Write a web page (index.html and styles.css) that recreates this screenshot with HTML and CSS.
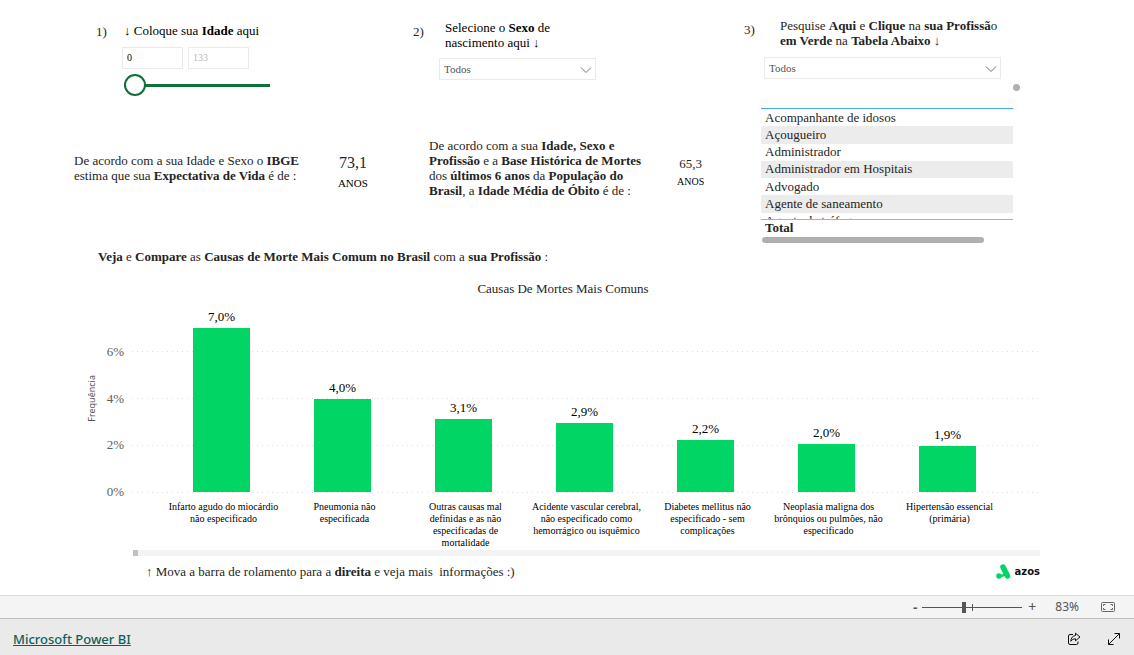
FILE: index.html
```html
<!DOCTYPE html>
<html lang="pt-BR">
<head>
<meta charset="utf-8">
<meta name="viewport" content="width=device-width, initial-scale=1">
<title>Causas De Mortes Mais Comuns</title>
<link rel="stylesheet" href="styles.css">
</head>
<body>
<main class="report">
  <div class="filters">
    <section class="column column-age">
      <div class="step">
        <span class="step-number">1)</span>
        <div class="step-body">
          <label class="prompt" for="age">↓ Coloque sua <b>Idade</b> aqui</label>
          <div class="range-inputs">
            <input type="text" value="0" aria-label="Idade mínima">
            <input type="text" value="133" aria-label="Idade máxima" disabled>
          </div>
          <input class="age-slider" id="age" type="range" min="0" max="133" value="0">
        </div>
      </div>
      <div class="metric metric-life">
        <p>De acordo com a sua Idade e Sexo o <b>IBGE</b><br>estima que sua <b>Expectativa de Vida</b> é de :</p>
        <div class="card card-large"><strong>73,1</strong><span>ANOS</span></div>
      </div>
    </section>

    <section class="column column-sex">
      <div class="step">
        <span class="step-number">2)</span>
        <div class="step-body">
          <label class="prompt" for="sex">Selecione o <b>Sexo</b> de<br>nascimento aqui ↓</label>
          <div class="dropdown">
            <select id="sex"><option>Todos</option></select>
            <svg viewBox="0 0 12 8" width="12" height="8" aria-hidden="true"><path d="M1 1.500 6 6.500 11 1.500"/></svg>
          </div>
        </div>
      </div>
      <div class="metric metric-death">
        <p>De acordo com a sua <b>Idade, Sexo e<br>Profissão</b> e a <b>Base Histórica de Mortes</b><br>dos <b>últimos 6 anos</b> da <b>População do<br>Brasil</b>, a <b>Idade Média de Óbito</b> é de :</p>
        <div class="card"><strong>65,3</strong><span>ANOS</span></div>
      </div>
    </section>

    <section class="column column-job">
      <div class="step">
        <span class="step-number">3)</span>
        <div class="step-body">
          <label class="prompt" for="job">Pesquise <b>Aqui</b> e <b>Clique</b> na <b>sua Profissã</b>o<br><b>em Verde</b> na <b>Tabela Abaixo</b> ↓</label>
          <div class="dropdown">
            <select id="job"><option>Todos</option></select>
            <svg viewBox="0 0 12 8" width="12" height="8" aria-hidden="true"><path d="M1 1.500 6 6.500 11 1.500"/></svg>
          </div>
        </div>
      </div>
      <span class="scroll-dot"></span>
      <div class="jobs">
        <div class="jobs-view">
          <table>
            <tbody>
              <tr><td>Acompanhante de idosos</td></tr>
              <tr><td>Açougueiro</td></tr>
              <tr><td>Administrador</td></tr>
              <tr><td>Administrador em Hospitais</td></tr>
              <tr><td>Advogado</td></tr>
              <tr><td>Agente de saneamento</td></tr>
              <tr><td>Agente de tráfego</td></tr>
            </tbody>
          </table>
        </div>
        <div class="jobs-total">Total</div>
        <div class="jobs-scroll"></div>
      </div>
    </section>
  </div>

  <h2 class="heading"><b>Veja</b> e <b>Compare</b> as <b>Causas de Morte Mais Comum no Brasil</b> com a <b>sua Profissão</b> :</h2>

  <section class="chart">
    <h3 class="chart-title">Causas De Mortes Mais Comuns</h3>
    <div class="axis-title">Frequência</div>
    <div class="ticks"><span>6%</span><span>4%</span><span>2%</span><span>0%</span></div>
    <div class="gridlines"><i></i><i></i><i></i><i></i></div>
    <div class="bars">
      <div class="slot"><span>7,0%</span><div class="bar" style="height:87.5%"></div></div>
      <div class="slot"><span>4,0%</span><div class="bar" style="height:49.5%"></div></div>
      <div class="slot"><span>3,1%</span><div class="bar" style="height:39%"></div></div>
      <div class="slot"><span>2,9%</span><div class="bar" style="height:36.5%"></div></div>
      <div class="slot"><span>2,2%</span><div class="bar" style="height:27.5%"></div></div>
      <div class="slot"><span>2,0%</span><div class="bar" style="height:25.5%"></div></div>
      <div class="slot"><span>1,9%</span><div class="bar" style="height:24.25%"></div></div>
    </div>
    <div class="categories">
      <span>Infarto agudo do miocárdio<br>não especificado</span>
      <span>Pneumonia não<br>especificada</span>
      <span>Outras causas mal<br>definidas e as não<br>especificadas de<br>mortalidade</span>
      <span>Acidente vascular cerebral,<br>não especificado como<br>hemorrágico ou isquêmico</span>
      <span>Diabetes mellitus não<br>especificado - sem<br>complicações</span>
      <span>Neoplasia maligna dos<br>brônquios ou pulmões, não<br>especificado</span>
      <span>Hipertensão essencial<br>(primária)</span>
    </div>
    <div class="chart-scroll"><i></i></div>
  </section>

  <div class="report-foot">
    <p>↑ Mova a barra de rolamento para a <b>direita</b> e veja mais&nbsp; informações :)</p>
    <div class="brand">
      <svg viewBox="0 0 15 15" width="15" height="15" aria-hidden="true">
        <path d="M7 3 11.500 12" stroke="#01d664" stroke-width="5.500" stroke-linecap="round"/>
        <circle cx="2.900" cy="12" r="2.700" fill="#01d664"/>
        <path d="M2.900 12Q6 12.500 9 10.500" stroke="#01d664" stroke-width="2.500" fill="none"/>
      </svg>
      <span>azos</span>
    </div>
  </div>
</main>

<div class="zoombar">
  <button type="button" aria-label="Reduzir">-</button>
  <input class="zoom-slider" type="range" min="0" max="100" value="41" aria-label="Zoom">
  <button type="button" class="zoom-in" aria-label="Ampliar">+</button>
  <span class="zoom-value">83%</span>
  <button type="button" class="fit" aria-label="Ajustar à página">
    <svg viewBox="0 0 14 10" width="14" height="10"><rect x=".5" y=".5" width="13" height="9" rx="1"/><path d="M2.500 4V2.500H4.500M9.500 2.500H11.500V4M11.500 6V7.500H9.500M4.500 7.500H2.500V6"/></svg>
  </button>
</div>

<footer class="footer">
  <a href="#">Microsoft Power BI</a>
  <div class="actions">
    <button type="button" aria-label="Compartilhar">
      <svg viewBox="0 0 14 14" width="14" height="14"><path d="M6 2.500H3Q1.500 2.500 1.500 4V11Q1.500 12.500 3 12.500H9.500Q11 12.500 11 11V9.500"/><path d="M8.500 1.200 13 5 8.500 8.800V6.800Q5.500 6.500 3.800 9.300 4.200 4 8.500 3.500Z"/></svg>
    </button>
    <button type="button" aria-label="Tela inteira">
      <svg viewBox="0 0 14 14" width="14" height="14"><path d="M1.500 12.500 12.500 1.500M7.500 1.500H12.500V6.500M1.500 7.500V12.500H6.500"/></svg>
    </button>
  </div>
</footer>
</body>
</html>
```
FILE: styles.css
```css
* { box-sizing: border-box; }

body {
  margin: 0;
  min-height: 100vh;
  display: flex;
  flex-direction: column;
  background: #fff;
  color: #252423;
  font-family: "Liberation Serif", "Times New Roman", serif;
  font-size: 13px;
  line-height: 15px;
}

p, h2, h3 { margin: 0; font-size: 13px; font-weight: 400; }

button {
  padding: 0;
  border: 0;
  background: none;
  color: inherit;
  font: inherit;
  display: flex;
  align-items: center;
  justify-content: center;
}

.report { flex: 1; display: flex; flex-direction: column; }

/* Filters and summary cards */
.filters {
  display: grid;
  grid-template-columns: 339fr 331fr 390fr;
  padding-left: 74px;
}

.column { display: flex; flex-direction: column; }
.column-age { padding-top: 23px; }
.column-sex { padding-top: 20px; }
.column-job { padding-top: 18px; }

.step { display: flex; }
.column-age .step { padding-left: 22px; }
.step-number { width: 26px; flex: none; padding-top: 1px; }
.column-sex .step-number, .column-job .step-number { padding-top: 4px; }
.column-job .step-number { width: 20px; }
.step-body { display: flex; flex-direction: column; }
.prompt { color: #000; }
.column-age .prompt { padding-left: 2px; }
.column-sex .prompt { padding-left: 6px; }
.column-job .prompt { padding-left: 16px; color: #252423; }

.range-inputs { display: flex; gap: 5px; margin-top: 9px; }
.range-inputs input {
  width: 61px;
  height: 22px;
  padding: 0 4px 2px;
  border: 1px solid #eaeaea;
  background: #fff;
  color: #000;
  font: 10px "Liberation Serif", serif;
}
.range-inputs input:disabled { color: #b8b8b8; }

input[type="range"] { appearance: none; margin: 0; background: none; }
input.age-slider[type="range"] { width: 146px; height: 22px; margin: 5px 0 0 2px; }
.age-slider::-webkit-slider-runnable-track {
  height: 3px;
  background: #0f703b;
}
.age-slider::-webkit-slider-thumb {
  appearance: none;
  width: 22px;
  height: 22px;
  margin-top: -10px;
  border: 2px solid #0f703b;
  border-radius: 50%;
  background: #fff;
}

.dropdown { display: grid; align-items: center; width: 157px; margin-top: 8px; }
.column-job .dropdown { width: 237px; margin-top: 9px; }
.dropdown > * { grid-area: 1 / 1; }
.dropdown select {
  appearance: none;
  width: 100%;
  height: 22px;
  padding: 0 20px 0 4px;
  border: 1px solid #eaeaea;
  border-radius: 0;
  background: #fff;
  color: #555;
  font: 11px "Liberation Serif", serif;
}
.dropdown svg { justify-self: end; margin: 2px 4px 0 0; pointer-events: none; }
.dropdown path { fill: none; stroke: #777; }

.metric { display: flex; align-items: center; }
.metric-life { align-items: flex-start; gap: 39px; margin-top: 57px; }
.metric-death { gap: 36px; margin-top: 58px; padding-left: 16px; }
.card { display: flex; flex-direction: column; align-items: center; gap: 3px; padding-top: 8px; }
.card strong { font-weight: 400; }
.card span { font-size: 10px; color: #000; }
.card-large { gap: 4px; padding-top: 1px; }
.card-large strong { font-size: 16px; line-height: 18px; }
.card-large span { font-size: 11px; }

.scroll-dot {
  width: 7px;
  height: 7px;
  margin: 5px 0 0 269px;
  border-radius: 50%;
  background: #b0b0b0;
}

.jobs { width: 252px; margin: 17px 0 0 17px; }
.jobs-view {
  height: 112px;
  overflow: hidden;
  border-top: 1px solid #4aa5f5;
  border-bottom: 1px solid #7dbcf5;
}
.jobs table { width: 100%; height: 121px; border-collapse: collapse; }
.jobs td { padding: 0 4px 1px; }
.jobs tr:nth-child(even) { background: #ececec; }
.jobs-total { padding: 0 4px 2px; font-weight: 700; }
.jobs-scroll { width: 88%; height: 6px; margin-left: 1px; border-radius: 3px; background: #b0b0b0; }

.heading { padding: 6px 0 0 98px; }

/* Bar chart */
.chart {
  display: grid;
  grid-template-columns: 12px 26px 1fr;
  grid-template-rows: auto 188px auto auto;
  column-gap: 4px;
  padding: 17px 94px 0 86px;
}
.chart-title { grid-column: 1 / -1; text-align: center; padding-bottom: 8px; }
.axis-title {
  grid-area: 2 / 1;
  align-self: center;
  justify-self: center;
  writing-mode: vertical-rl;
  transform: rotate(180deg);
  font: 9px/12px "Noto Sans", sans-serif;
  color: #555;
}
.ticks {
  grid-area: 2 / 2;
  display: flex;
  flex-direction: column;
  justify-content: space-between;
  align-items: flex-end;
  margin: 40px 4px -7px 0;
  color: #605e5c;
}
.gridlines { grid-area: 2 / 3; display: flex; flex-direction: column; margin: 1px 0 -1px; }
.gridlines i {
  flex: 1;
  background: repeating-linear-gradient(90deg, #ddd 0 1px, transparent 1px 5px) bottom / 100% 1px no-repeat;
}
.bars, .categories { display: grid; grid-template-columns: repeat(7, 1fr); }
.bars { grid-area: 2 / 3; padding: 0 32px 0 29px; }
.slot {
  display: flex;
  flex-direction: column;
  justify-content: flex-end;
  align-items: center;
  color: #000;
}
.slot span { padding-bottom: 4px; }
.bar { flex: none; width: 47%; background: #01d664; }
.categories {
  grid-area: 3 / 3;
  padding: 9px 30px 0 31px;
  min-height: 58px;
  color: #000;
  font-size: 10px;
  line-height: 12px;
  text-align: center;
  white-space: nowrap;
}
.chart-scroll { grid-area: 4 / 3; height: 6px; margin-left: 1px; background: #f3f3f3; }
.chart-scroll i { display: block; width: 5px; height: 100%; background: #c1c1c1; }

.report-foot {
  display: flex;
  justify-content: space-between;
  align-items: center;
  padding: 8px 94px 0 146px;
}
.brand { display: flex; align-items: center; gap: 4px; }
.brand svg { fill: none; overflow: visible; }
.brand span { font: 700 10px/14px "DejaVu Sans", sans-serif; color: #111; }

/* Zoom bar */
.zoombar {
  display: flex;
  align-items: center;
  justify-content: flex-end;
  height: 23px;
  padding-right: 19px;
  border-top: 1px solid #dcdcdc;
  background: #f4f4f4;
  color: #555;
  font: 12px/16px "Noto Sans", sans-serif;
}
.zoombar button { width: 14px; font-size: 14px; font-weight: 600; }
.zoombar .zoom-in { width: 20px; font-weight: 400; }
.zoombar .zoom-slider {
  width: 100px;
  height: 12px;
  background: linear-gradient(#555, #555) 50% 50% / 1px 7px no-repeat;
}
.zoom-slider::-webkit-slider-runnable-track { height: 1px; background: #555; }
.zoom-slider::-webkit-slider-thumb {
  appearance: none;
  width: 4px;
  height: 11px;
  margin-top: -5px;
  background: #555;
}
.zoom-value { margin: 0 22px 0 13px; }
.fit svg { fill: none; stroke: #666; }

.footer {
  display: flex;
  align-items: center;
  justify-content: space-between;
  height: 37px;
  padding: 4px 13px 0;
  border-top: 1px solid #c0c0c0;
  background: #eaeaea;
}
.footer a { color: #0f5f57; font: 500 13px/20px "Noto Sans", sans-serif; }
.actions { display: flex; gap: 26px; }
.actions svg { fill: none; stroke: #111; }
```
